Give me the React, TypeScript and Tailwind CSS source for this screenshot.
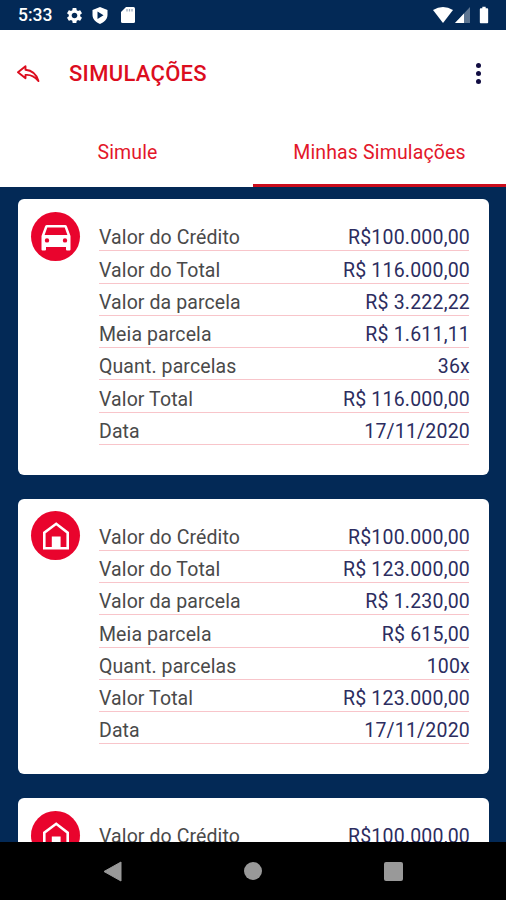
import { MdBatteryFull, MdSettings } from "react-icons/md";

type Kind = "car" | "house";

interface Simulation {
  id: number;
  kind: Kind;
  rows: [string, string][];
}

const simulations: Simulation[] = [
  {
    id: 1,
    kind: "car",
    rows: [
      ["Valor do Crédito", "R$100.000,00"],
      ["Valor do Total", "R$ 116.000,00"],
      ["Valor da parcela", "R$ 3.222,22"],
      ["Meia parcela", "R$ 1.611,11"],
      ["Quant. parcelas", "36x"],
      ["Valor Total", "R$ 116.000,00"],
      ["Data", "17/11/2020"],
    ],
  },
  {
    id: 2,
    kind: "house",
    rows: [
      ["Valor do Crédito", "R$100.000,00"],
      ["Valor do Total", "R$ 123.000,00"],
      ["Valor da parcela", "R$ 1.230,00"],
      ["Meia parcela", "R$ 615,00"],
      ["Quant. parcelas", "100x"],
      ["Valor Total", "R$ 123.000,00"],
      ["Data", "17/11/2020"],
    ],
  },
  {
    id: 3,
    kind: "house",
    rows: [["Valor do Crédito", "R$100.000,00"]],
  },
];

const CarIcon = () => (
  <svg className="mt-[3px]" width="30" height="26" viewBox="0 0 30 26">
    <path
      fill="white"
      fillRule="evenodd"
      d="M6 0H24Q25.5 0 26 1.4L29.5 11V24.5Q29.5 25.5 28.5 25.5H26Q25 25.5 25 24.5V22H5V24.5Q5 25.5 4 25.5H1.5Q.5 25.5 .5 24.5V11L4 1.4Q4.5 0 6 0ZM6.3 2.4L3.6 10H26.4L23.7 2.4ZM6 13.2A2.2 2.2 0 1 0 6 17.6A2.2 2.2 0 1 0 6 13.2ZM24 13.2A2.2 2.2 0 1 0 24 17.6A2.2 2.2 0 1 0 24 13.2Z"
    />
  </svg>
);

const HouseIcon = () => (
  <svg className="mt-px" width="28" height="30" viewBox="0 0 28 30">
    <path fill="none" stroke="white" strokeWidth="2.6" d="M2.3 27.2V11.6L14.2 2.8L25.7 11.6V27.2Z" />
    <path fill="white" d="M9.8 15.5H18.6V28H9.8Z" />
  </svg>
);

const StatusBar = () => (
  <div className="flex h-[30px] shrink-0 items-center bg-[#032956] pl-[18px] pr-[12px] text-white">
    <span className="w-[47px] pt-[2px] text-[17.5px] font-medium leading-none">5:33</span>
    <MdSettings size={19} />
    <svg className="ml-2" width="16" height="17" viewBox="0 0 16 17">
      <path fillRule="evenodd" fill="white" d="M8 0L15.5 3V8C15.5 12 12 15.5 8 17C4 15.5 .5 12 .5 8V3ZM5.5 4.5V12L11.5 8.2Z" />
    </svg>
    <svg className="ml-[13px]" width="14" height="16" viewBox="0 0 14 16">
      <path fill="white" d="M5 0H12.5Q14 0 14 1.5V14.5Q14 16 12.5 16H1.5Q0 16 0 14.5V5Z" />
      <path stroke="#9eabbd" strokeWidth="1.3" d="M6 2V4.5M8.5 2V4.5M11 2V4.5" />
    </svg>
    <div className="ml-auto flex items-center">
      <svg width="20" height="16" viewBox="0 0 20 16">
        <path fill="white" d="M0 3Q10-3 20 3L10 16Z" />
      </svg>
      <svg className="ml-0.5" width="15" height="16" viewBox="0 0 15 16">
        <path fill="#5d7591" d="M15 0V16H0Z" />
        <path fill="white" d="M9 6.4V16H0Z" />
      </svg>
      <MdBatteryFull className="ml-1" size={20} />
    </div>
  </div>
);

const Header = () => (
  <header className="flex h-[88px] shrink-0 items-center pl-[17px] pr-[25px]">
    <svg width="23" height="18" viewBox="0 0 23 18" fill="none" stroke="#dc0d1e" strokeWidth="1.9" strokeLinejoin="round">
      <path d="M8.5 1.2L1 7.3L8.5 13.2V10C13.5 9.4 17.5 11.5 21.5 16C19.5 9.8 15.5 5.4 8.5 4.8Z" />
    </svg>
    <h1 className="ml-[29px] text-[22px] font-medium leading-none tracking-[0.3px] text-[#dc0d1e]">SIMULAÇÕES</h1>
    <div className="-mt-0.5 ml-auto flex flex-col gap-[3px]">
      <span className="size-[5px] rounded-full bg-[#110d42]" />
      <span className="size-[5px] rounded-full bg-[#110d42]" />
      <span className="size-[5px] rounded-full bg-[#110d42]" />
    </div>
  </header>
);

const Tabs = () => (
  <nav className="grid h-[69px] shrink-0 grid-cols-2 text-[19.5px] tracking-[0.15px] text-[#e3172a]">
    <button className="pl-[2px]">Simule</button>
    <button className="border-b-[3px] border-[#cb0d1c] pt-[3px]">Minhas Simulações</button>
  </nav>
);

const SimulationCard = ({ kind, rows }: Simulation) => (
  <article className="flex h-[275.5px] shrink-0 rounded-[6px] bg-white pl-[13px] pr-5 pt-[12.5px]">
    <div className="flex size-[49px] shrink-0 items-center justify-center rounded-full bg-[#e9042d]">
      {kind === "car" ? <CarIcon /> : <HouseIcon />}
    </div>
    <dl className="ml-[19px] flex-1 pt-[7.5px]">
      {rows.map(([label, value]) => (
        <div key={label} className="flex h-[32.25px] items-end justify-between border-b border-[#f8c5ca] pb-px text-[19.5px] leading-[23px]">
          <dt className="tracking-[0.1px] text-[#4a4a4a]">{label}</dt>
          <dd className="-mr-px tracking-[0.2px] text-[#2c2d60]">{value}</dd>
        </div>
      ))}
    </dl>
  </article>
);

const NavigationBar = () => (
  <div className="flex h-[58px] shrink-0 items-center justify-between bg-black pl-[103px] pr-[103px]">
    <svg width="19" height="21" viewBox="0 0 19 21">
      <path fill="#999" stroke="#999" strokeLinejoin="round" d="M1 10.5L18 1V20Z" />
    </svg>
    <span className="size-[18px] rounded-full bg-[#999]" />
    <span className="size-[19px] rounded-[2px] bg-[#999]" />
  </div>
);

export default function App() {
  return (
    <div className="flex h-[900px] w-[506px] flex-col overflow-hidden bg-white font-['Roboto',sans-serif]">
      <StatusBar />
      <Header />
      <Tabs />
      <main className="flex min-h-0 flex-1 flex-col gap-6 overflow-hidden bg-[#032956] pl-[18px] pr-[17px] pt-3">
        {simulations.map((simulation) => (
          <SimulationCard key={simulation.id} {...simulation} />
        ))}
      </main>
      <NavigationBar />
    </div>
  );
}
